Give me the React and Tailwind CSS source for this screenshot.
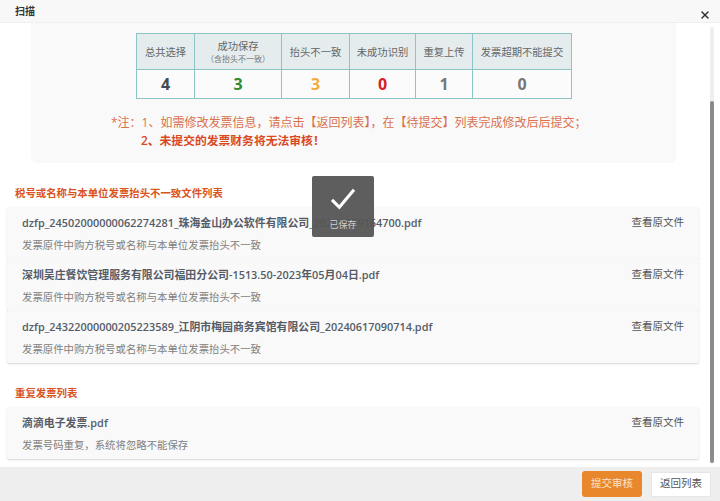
import { X } from "lucide-react";

const font = { fontFamily: '"Open Sans", "Noto Sans CJK SC", sans-serif' };

const stats = [
    { label: "总共选择", value: "4", color: "text-[#444b52]", width: "w-[57px]" },
    { label: "成功保存", sub: "（含抬头不一致）", value: "3", color: "text-[#2e8b2e]", width: "w-[87px]" },
    { label: "抬头不一致", value: "3", color: "text-[#f0ad3e]", width: "w-[68px]" },
    { label: "未成功识别", value: "0", color: "text-[#d81e1e]", width: "w-[66px]" },
    { label: "重复上传", value: "1", color: "text-[#777777]", width: "w-[57px]" },
    { label: "发票超期不能提交", value: "0", color: "text-[#777777]", width: "w-[99px]" },
];

const mismatchFiles = [
    { name: "dzfp_24502000000062274281_珠海金山办公软件有限公司_20240529164700.pdf", note: "发票原件中购方税号或名称与本单位发票抬头不一致" },
    { name: "深圳吴庄餐饮管理服务有限公司福田分公司-1513.50-2023年05月04日.pdf", note: "发票原件中购方税号或名称与本单位发票抬头不一致" },
    { name: "dzfp_24322000000205223589_江阴市梅园商务宾馆有限公司_20240617090714.pdf", note: "发票原件中购方税号或名称与本单位发票抬头不一致" },
];

function FileCard({ file }) {
    return (
        <div className="h-[52px] px-[15px] bg-[#f9f9f9] rounded-[2px] shadow-[0_1px_2px_rgba(0,0,0,0.16)]">
            <div className="flex justify-between pt-[7px]">
                <span className="text-[10.9px] leading-[17px] font-semibold text-[#555c68] whitespace-nowrap">{file.name}</span>
                <span className="text-[10.5px] leading-[17px] text-[#555555] whitespace-nowrap">查看原文件</span>
            </div>
            <p className="mt-[6px] text-[10.4px] leading-[17px] text-[#808080]">{file.note}</p>
        </div>
    );
}

export default function App() {
    return (
        <div className="relative w-[720px] h-[501px] flex flex-col overflow-hidden bg-white" style={font}>
            {/* Header */}
            <div className="h-[23px] shrink-0 bg-[#f8f8f8] border-b border-[#efefef] px-[15px] text-[10px] leading-[22px] font-semibold text-[#333333]">
                扫描
            </div>

            {/* Body */}
            <div className="flex-1 min-h-0 overflow-hidden">
                <div className="mx-[31px] w-[645px] h-[140px] bg-[#f9f9f9] rounded-b-md pt-[10px]">
                    <div className="ml-[105px] w-[436px] flex border border-[#8fc4c4]">
                        {stats.map((s, i) => (
                            <div key={s.label} className={`${s.width} shrink-0 ${i > 0 ? "border-l border-[#8fc4c4]" : ""}`}>
                                <div className="h-[36px] bg-[#e4eced] border-b border-[#8fc4c4] flex flex-col items-center justify-center text-[10.3px] leading-[14px] text-[#666666] whitespace-nowrap">
                                    <span>{s.label}</span>
                                    {s.sub && <span className="text-[8px] leading-[12px] text-[#777777]">{s.sub}</span>}
                                </div>
                                <div className={`h-[28px] bg-[#fbfbfb] flex items-center justify-center text-[16px] font-bold ${s.color}`}>
                                    {s.value}
                                </div>
                            </div>
                        ))}
                    </div>
                    <div className="mt-[14px] ml-[80px] text-[12px] leading-[19px] text-[#d9714f] whitespace-nowrap">
                        *注：1、如需修改发票信息，请点击【返回列表】，在【待提交】列表完成修改后后提交；
                    </div>
                    <div className="ml-[110px] text-[11.8px] leading-[17px] font-semibold text-[#d9481f] whitespace-nowrap">
                        2、未提交的发票财务将无法审核！
                    </div>
                </div>

                <h3 className="mt-[22px] ml-[15px] text-[10.4px] leading-[16px] font-bold text-[#d9541e]">
                    税号或名称与本单位发票抬头不一致文件列表
                </h3>
                <div className="mt-[6px] ml-[7px] w-[692px] flex flex-col">
                    {mismatchFiles.map((f) => (
                        <FileCard key={f.name} file={f} />
                    ))}
                </div>

                <h3 className="mt-[22px] ml-[15px] text-[10.4px] leading-[16px] font-bold text-[#d9541e]">
                    重复发票列表
                </h3>
                <div className="mt-[6px] ml-[7px] w-[692px]">
                    <FileCard file={{ name: "滴滴电子发票.pdf", note: "发票号码重复，系统将忽略不能保存" }} />
                </div>
            </div>

            {/* Footer */}
            <div className="h-[34px] shrink-0 bg-[#eeeeee] flex items-center justify-end gap-[9px] pr-[9px]">
                <button className="w-[60px] h-[26px] rounded-[3px] bg-[#e8872c] text-[10.5px] text-[#fbe3c8]">提交审核</button>
                <button className="w-[60px] h-[25px] rounded-[2px] bg-white border border-[#e6e6e6] text-[10.5px] text-[#555555]">返回列表</button>
            </div>

            {/* Scrollbar */}
            <div className="absolute left-[710px] top-[27px] w-[4px] h-[436px] rounded-full bg-[#eeeeee]">
                <div className="absolute left-0 top-[74px] w-[4px] h-[362px] rounded-full bg-[#8c8c8c]" />
            </div>

            {/* Close */}
            <X className="absolute left-[699px] top-[9px] w-[12px] h-[12px] text-[#333333]" strokeWidth={3} />

            {/* Toast */}
            <div className="absolute left-[312px] top-[176px] w-[62px] h-[61px] bg-[#555555]/95 rounded-[2px] flex flex-col items-center text-white">
                <svg viewBox="0 0 28 24" className="mt-[12px] w-[26px] h-[22px]" fill="none" stroke="#ffffff" strokeWidth="3.4">
                    <path d="M2 13l8 8L26 2" />
                </svg>
                <span className="mt-[8px] text-[9px] leading-[14px] text-[#d0d0d0]">已保存</span>
            </div>
        </div>
    );
}
